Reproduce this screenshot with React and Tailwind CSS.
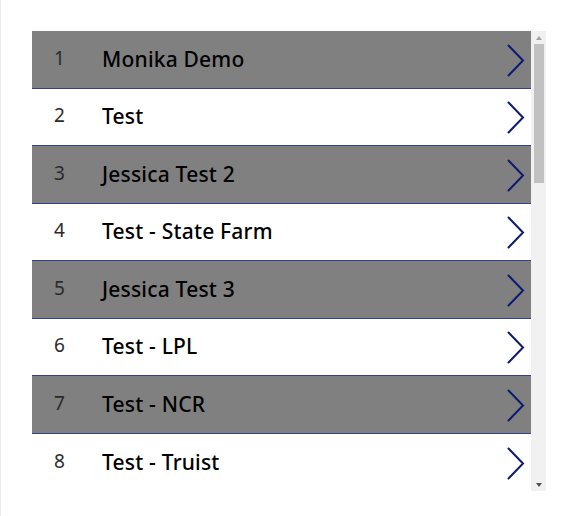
const rows = [
  'Monika Demo',
  'Test',
  'Jessica Test 2',
  'Test - State Farm',
  'Jessica Test 3',
  'Test - LPL',
  'Test - NCR',
  'Test - Truist',
];

const Chevron = () => (
  <svg width="18" height="33" viewBox="0 0 18 33" fill="none">
    <path d="M1.5 1.5 L16 16.5 L1.5 31.5" stroke="#0d1a73" strokeWidth="2" strokeLinecap="round" strokeLinejoin="miter" />
  </svg>
);

const App = () => {
  return (
    <div className="w-[563px] h-[516px] bg-white border-l border-[#ececec] pt-[31px] pl-[31px]" style={{ fontFamily: '"Noto Sans", "Open Sans", sans-serif' }}>
      <div className="flex w-[514px] h-[460px]">
        <div className="w-[499px] h-[460px] overflow-hidden">
          {rows.map((name, i) => (
            <div
              key={i}
              className={`flex items-center h-[57.5px] ${i < rows.length - 1 ? 'border-b border-[#34428a]' : ''} ${i % 2 === 0 ? 'bg-[#808080]' : 'bg-white'}`}
            >
              <div className="w-[70px] pl-[22px] pb-[3px] text-[19px] text-[#2a2a2a] font-normal">{i + 1}</div>
              <div className="flex-1 text-[21px] font-medium text-black tracking-[0.2px]">{name}</div>
              <div className="pr-[6px] pt-[2px]">
                <Chevron />
              </div>
            </div>
          ))}
        </div>
        {/* scrollbar */}
        <div className="w-[15px] h-[460px] bg-[#f1f1f1] flex flex-col items-center">
          <div className="h-[13px] flex items-center justify-center">
            <div className="w-0 h-0 border-l-[3.5px] border-r-[3.5px] border-b-[4px] border-l-transparent border-r-transparent border-b-[#a3a3a3]" />
          </div>
          <div className="w-[10px] h-[139px] bg-[#c1c1c1]" />
          <div className="flex-1" />
          <div className="h-[13px] flex items-center justify-center">
            <div className="w-0 h-0 border-l-[3.5px] border-r-[3.5px] border-t-[4px] border-l-transparent border-r-transparent border-t-[#505050]" />
          </div>
        </div>
      </div>
    </div>
  );
};

export default App;
